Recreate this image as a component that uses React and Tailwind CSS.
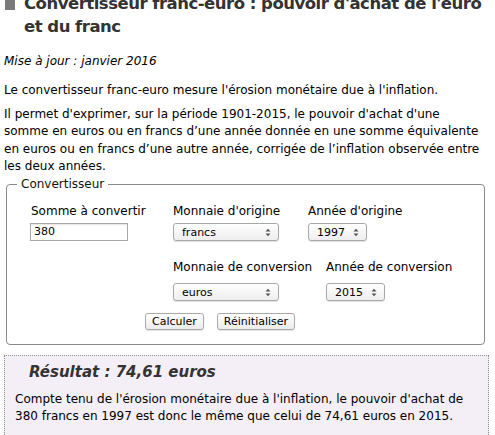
import React from 'react';

const font = { fontFamily: '"DejaVu Sans", Verdana, sans-serif' };

// petit select façon macOS avec les flèches
function Choix({ value, width }) {
  return (
    <div className={`flex items-center justify-between h-[18px] ${width} rounded-[3px] border border-[#a9a9a9] bg-gradient-to-b from-white to-[#eeeeee] pl-[8px] pr-[7px] text-[11px] text-black leading-none shadow-[0_1px_1px_rgba(0,0,0,0.12)]`}>
      <span>{value}</span>
      <svg width="6" height="9" viewBox="0 0 6 9">
        <path d="M0.5 3.5L3 0.8L5.5 3.5Z" fill="#555" />
        <path d="M0.5 5.5L3 8.2L5.5 5.5Z" fill="#555" />
      </svg>
    </div>
  );
}

function Bouton({ children }) {
  return (
    <button className="h-[17px] px-[6px] rounded-[3px] border border-[#a9a9a9] bg-gradient-to-b from-white to-[#ececec] text-[11px] leading-none text-black shadow-[0_1px_1px_rgba(0,0,0,0.12)]">
      {children}
    </button>
  );
}

export default function App() {
  return (
    <div className="w-[495px] h-[435px] overflow-hidden bg-white text-[12px] text-black" style={font}>
      {/* TITRE */}
      <div className="flex items-start gap-[9px] pl-[5px] -mt-[8px]">
        <div className="w-[10px] h-[10px] bg-[#7a7a7a] mt-[8px] shrink-0"></div>
        <h1 className="text-[16.5px] font-bold leading-[23px] tracking-[-0.5px] text-[#333333]">
          Convertisseur franc-euro : pouvoir d'achat de l'euro et du franc
        </h1>
      </div>

      <p className="italic mt-[16px] pl-[4px] leading-[15px]">Mise à jour : janvier 2016</p>

      <p className="mt-[13px] pl-[4px] leading-[17px]">
        Le convertisseur franc-euro mesure l'érosion monétaire due à l'inflation.
      </p>
      <p className="mt-[7px] pl-[4px] pr-[8px] leading-[17.3px]">
        Il permet d'exprimer, sur la période 1901-2015, le pouvoir d'achat d'une somme en euros ou en francs d’une année donnée en une somme équivalente en euros ou en francs d’une autre année, corrigée de l’inflation observée entre les deux années.
      </p>

      {/* CONVERTISSEUR */}
      <fieldset className="ml-[6px] mt-[2px] w-[479px] h-[168px] border border-[#8a8a8a] rounded-[4px] px-[23px] pt-[2px] pb-0">
        <legend className="px-[4px] ml-[-13px] text-[12px] leading-[15px] text-[#111]">Convertisseur</legend>
        <div className="grid grid-cols-[143px_135px_auto] gap-y-0 leading-[15px]">
          <div className="pl-[1px] mt-[10px]">Somme à convertir</div>
          <div className="mt-[10px]">Monnaie d'origine</div>
          <div className="mt-[10px]">Année d'origine</div>

          <div className="mt-[4px]">
            <div className="w-[98px] h-[18px] border border-[#a9a9a9] shadow-[inset_0_1px_1px_rgba(0,0,0,0.1)] px-[3px] text-[11px] leading-[16px]">380</div>
          </div>
          <div className="mt-[4px]"><Choix value="francs" width="w-[106px]" /></div>
          <div className="mt-[4px]"><Choix value="1997" width="w-[59px]" /></div>

          <div></div>
          <div className="col-span-2 mt-[19px] flex">
            <div className="w-[153px]">Monnaie de conversion</div>
            <div>Année de conversion</div>
          </div>

          <div></div>
          <div className="col-span-2 mt-[8px] flex">
            <div className="w-[153px]"><Choix value="euros" width="w-[106px]" /></div>
            <Choix value="2015" width="w-[59px]" />
          </div>
        </div>
        <div className="flex gap-[13px] mt-[12px] pl-[115px]">
          <Bouton>Calculer</Bouton>
          <Bouton>Réinitialiser</Bouton>
        </div>
      </fieldset>

      {/* RESULTAT */}
      <div className="ml-[4px] mt-[10px] w-[485px] h-[82px] border border-dotted border-[#8c8c8c] bg-[#f4eef6] pt-[6px] px-[10px]">
        <h2 className="pl-[14px] text-[15px] font-bold italic leading-[20px] text-[#333333]">Résultat : 74,61 euros</h2>
        <p className="mt-[9px] leading-[17px]">
          Compte tenu de l'érosion monétaire due à l'inflation, le pouvoir d'achat de 380 francs en 1997 est donc le même que celui de 74,61 euros en 2015.
        </p>
      </div>
    </div>
  );
}
